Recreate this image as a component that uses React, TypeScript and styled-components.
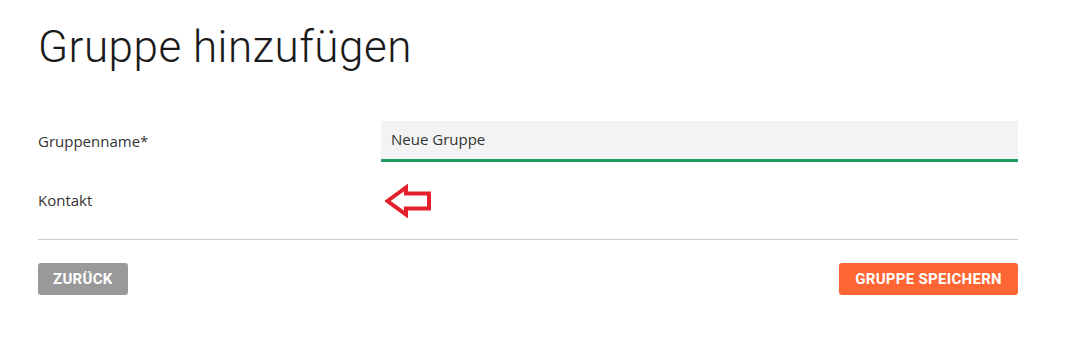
import React from "react";
import styled, { createGlobalStyle } from "styled-components";

const GlobalStyle = createGlobalStyle`
  body {
    margin: 0;
    background: #ffffff;
    font-family: "Open Sans", "Liberation Sans", sans-serif;
    color: #333333;
  }
`;

const Page = styled.div`
  padding: 19px 53px 0 38px;
`;

const Title = styled.h1`
  margin: 0 0 46px 0;
  font-family: Roboto, "Liberation Sans", sans-serif;
  font-weight: 300;
  font-size: 44px;
  letter-spacing: 0.5px;
  line-height: 56px;
  color: #1a1a1a;
`;

const Row = styled.div<{ $h: number }>`
  display: grid;
  grid-template-columns: 343px 1fr;
  align-items: center;
  height: ${(p) => p.$h}px;
`;

const Label = styled.label`
  font-size: 15px;
  line-height: 20px;
  padding-bottom: 2px;
  color: #333333;
`;

const Input = styled.input`
  box-sizing: border-box;
  height: 41px;
  width: 100%;
  padding: 0 10px 3px 10px;
  border: none;
  border-bottom: 3px solid #1e9b5e;
  background: #f3f3f3;
  font-family: "Open Sans", "Liberation Sans", sans-serif;
  font-size: 15px;
  color: #333333;
  outline: none;
`;

const Divider = styled.hr`
  margin: 0 0 23px 0;
  border: none;
  border-top: 1px solid #cccccc;
`;

const Actions = styled.div`
  display: flex;
  justify-content: space-between;
  align-items: center;
`;

const Button = styled.button<{ $variant: "grey" | "orange" }>`
  height: 32px;
  padding: 0 ${(p) => (p.$variant === "orange" ? 16 : 15)}px;
  border: none;
  border-radius: 3px;
  background: ${(p) => (p.$variant === "orange" ? "#ff6633" : "#999999")};
  color: #ffffff;
  font-family: Roboto, "Liberation Sans", sans-serif;
  font-weight: 700;
  font-size: 15px;
  letter-spacing: 0.3px;
  text-transform: uppercase;
  cursor: pointer;
`;

const ArrowSlot = styled.div`
  display: flex;
  align-items: center;
  padding-left: 4px;
`;

const Arrow = () => (
  <svg width="48" height="34" viewBox="0 0 48 34">
    <path
      d="M2.5 17 L21 3.5 L21 9.5 L44 9.5 L44 24.5 L21 24.5 L21 30.5 Z"
      fill="none"
      stroke="#e3202b"
      strokeWidth="4"
      strokeLinejoin="miter"
    />
  </svg>
);

export default function App() {
  return (
    <>
      <GlobalStyle />
      <Page>
        <Title>Gruppe hinzufügen</Title>
        <Row $h={41}>
          <Label>Gruppenname*</Label>
          <Input defaultValue="Neue Gruppe" />
        </Row>
        <Row $h={77}>
          <Label>Kontakt</Label>
          <ArrowSlot>
            <Arrow />
          </ArrowSlot>
        </Row>
        <Divider />
        <Actions>
          <Button $variant="grey">Zurück</Button>
          <Button $variant="orange">Gruppe speichern</Button>
        </Actions>
      </Page>
    </>
  );
}
